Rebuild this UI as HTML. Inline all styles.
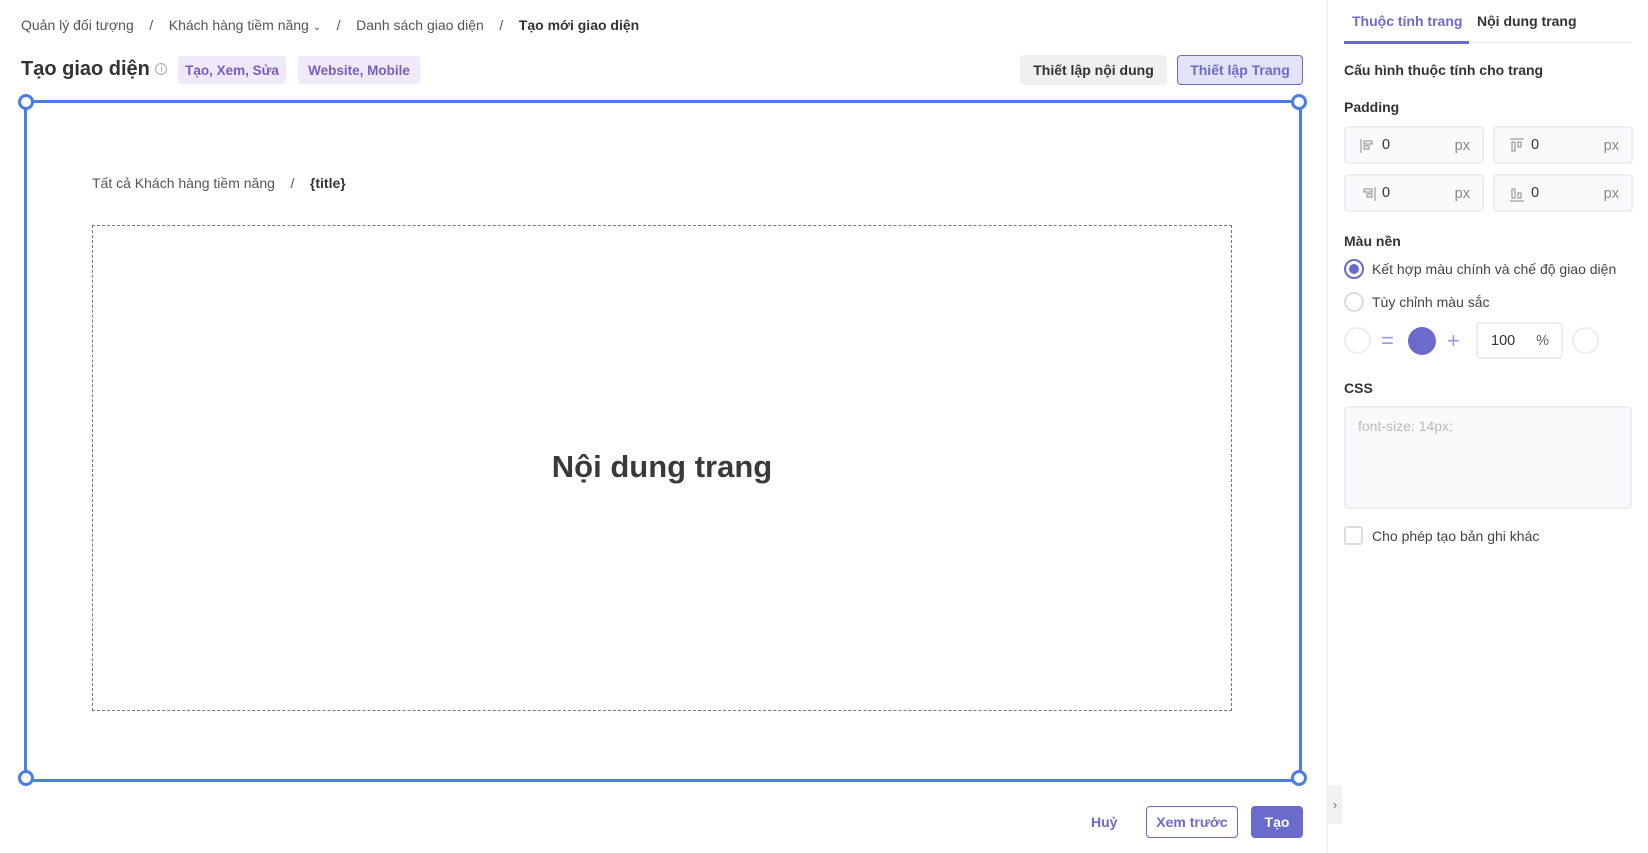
<!DOCTYPE html>
<html><head><meta charset="utf-8"><style>
*{box-sizing:border-box;margin:0;padding:0}
body{width:1648px;height:853px;background:#fff;font-family:"Liberation Sans",sans-serif;color:#333;position:relative;overflow:hidden;font-size:14px}
.a{position:absolute;white-space:nowrap}
.bc{color:#555;font-size:14px}
.tag{position:absolute;background:#efe9f9;color:#7b5cc4;border-radius:4px;font-size:13.5px;font-weight:bold;display:flex;align-items:center;justify-content:center}
.btn{position:absolute;border-radius:4px;display:flex;align-items:center;justify-content:center;font-size:14px;font-weight:bold}
.inp{position:absolute;border:2px solid #eeeef2;background:#fafafc;border-radius:4px;width:140px;height:38px}
.inp .v{position:absolute;left:36px;top:9px;font-size:14.5px;color:#333}
.inp .u{position:absolute;right:12px;top:10px;font-size:14.5px;color:#888}
.inp .ic{position:absolute;left:14px;top:10px;width:16px;height:16px}
.h{position:absolute;width:16px;height:16px;border:3px solid #4a7de6;background:#fff;border-radius:50%}
.lbl{font-weight:bold;font-size:14px;color:#333}
</style></head><body>
<div class="a bc" style="left:21px;top:17px">Quản lý đối tượng &nbsp;&nbsp;&nbsp;/&nbsp;&nbsp;&nbsp; Khách hàng tiềm năng <span style="font-size:10px">&#8964;</span> &nbsp;&nbsp;&nbsp;/&nbsp;&nbsp;&nbsp; Danh sách giao diện &nbsp;&nbsp;&nbsp;/&nbsp;&nbsp;&nbsp; <b style="color:#333">Tạo mới giao diện</b></div>
<div class="a" style="left:21px;top:58px;font-size:20px;font-weight:bold;color:#333">Tạo giao diện <span style="font-size:10px;color:#aaa;border:1px solid #aaa;border-radius:50%;display:inline-block;width:12px;height:12px;text-align:center;line-height:11px;font-weight:normal;vertical-align:3px">i</span></div>
<div class="tag" style="left:178px;top:56px;width:108px;height:28px">Tạo, Xem, Sửa</div>
<div class="tag" style="left:298px;top:56px;width:122px;height:28px">Website, Mobile</div>
<div class="btn" style="left:1020px;top:55px;width:147px;height:30px;background:#f0f0f0;color:#333">Thiết lập nội dung</div>
<div class="btn" style="left:1177px;top:55px;width:126px;height:30px;background:#e3e3f7;border:1px solid #6b6bcb;color:#6b6bcb">Thiết lập Trang</div>

<div class="a" style="left:24px;top:100px;width:1278px;height:682px;border:3px solid #4a7de6"></div>
<div class="h" style="left:18px;top:94px"></div>
<div class="h" style="left:1291px;top:94px"></div>
<div class="h" style="left:18px;top:770px"></div>
<div class="h" style="left:1291px;top:770px"></div>
<div class="a bc" style="left:92px;top:175px;color:#555">Tất cả Khách hàng tiềm năng &nbsp;&nbsp;&nbsp;/&nbsp;&nbsp;&nbsp; <b style="color:#333">{title}</b></div>
<div class="a" style="left:92px;top:225px;width:1140px;height:486px;border:1px dashed #777"></div>
<div class="a" style="left:0;top:449px;width:1324px;text-align:center;font-size:31px;font-weight:bold;color:#3a3a3a">Nội dung trang</div>

<div class="a" style="left:1091px;top:814px;color:#6b6bcb;font-weight:bold;font-size:14px">Huỷ</div>
<div class="btn" style="left:1146px;top:806px;width:92px;height:32px;border:1px solid #6b6bcb;color:#6b6bcb">Xem trước</div>
<div class="btn" style="left:1251px;top:806px;width:52px;height:32px;background:#6b6bcb;color:#fff">Tạo</div>

<div class="a" style="left:1327px;top:0;width:1px;height:853px;background:#ececec"></div>
<div class="a" style="left:1328px;top:785px;width:14px;height:39px;background:#f2f2f2;color:#777;font-size:13px;text-align:center;line-height:39px">›</div>

<div class="a" style="left:1352px;top:13px;font-weight:bold;font-size:14px;color:#6b6bcb">Thuộc tính trang</div>
<div class="a" style="left:1477px;top:13px;font-weight:bold;font-size:14px;color:#333">Nội dung trang</div>
<div class="a" style="left:1344px;top:42px;width:288px;height:1px;background:#e8e8e8"></div>
<div class="a" style="left:1344px;top:41px;width:125px;height:3px;background:#6b6bcb"></div>
<div class="a lbl" style="left:1344px;top:62px">Cấu hình thuộc tính cho trang</div>
<div class="a lbl" style="left:1344px;top:99px">Padding</div>
<div class="inp" style="left:1344px;top:126px"><svg class="ic" viewBox="0 0 16 16" fill="none" stroke="#888"><path d="M1 1v14M4 3h8v3H4zM4 8h5v3H4z"/></svg><span class="v">0</span><span class="u">px</span></div>
<div class="inp" style="left:1493px;top:126px"><svg class="ic" viewBox="0 0 16 16" fill="none" stroke="#888"><path d="M1 1h14M3 4h3v9H3zM9 4h3v5H9z"/></svg><span class="v">0</span><span class="u">px</span></div>
<div class="inp" style="left:1344px;top:174px"><svg class="ic" viewBox="0 0 16 16" fill="none" stroke="#888"><path d="M15 1v14M4 3h8v3H4zM7 8h5v3H7z"/></svg><span class="v">0</span><span class="u">px</span></div>
<div class="inp" style="left:1493px;top:174px"><svg class="ic" viewBox="0 0 16 16" fill="none" stroke="#888"><path d="M1 15h14M3 3h3v9H3zM9 7h3v5H9z"/></svg><span class="v">0</span><span class="u">px</span></div>
<div class="a lbl" style="left:1344px;top:233px">Màu nền</div>
<div class="a" style="left:1344px;top:259px;width:20px;height:20px;border:2px solid #6b6bcb;border-radius:50%"><div style="margin:3px;width:10px;height:10px;border-radius:50%;background:#6b6bcb"></div></div>
<div class="a" style="left:1372px;top:261px;font-size:14px;color:#444">Kết hợp màu chính và chế độ giao diện</div>
<div class="a" style="left:1344px;top:292px;width:20px;height:20px;border:2px solid #ddd;border-radius:50%"></div>
<div class="a" style="left:1372px;top:294px;font-size:14px;color:#444">Tùy chỉnh màu sắc</div>
<div class="a" style="left:1344px;top:327px;width:27px;height:27px;border:2px solid #eee;border-radius:50%"></div>
<div class="a" style="left:1381px;top:328px;font-size:22px;color:#9a9ae0">=</div>
<div class="a" style="left:1408px;top:327px;width:28px;height:28px;border-radius:50%;background:#6b6bcb"></div>
<div class="a" style="left:1447px;top:328px;font-size:22px;color:#9a9ae0">+</div>
<div class="a" style="left:1476px;top:322px;width:87px;height:37px;border:2px solid #eee;border-radius:4px"><span style="position:absolute;left:13px;top:9px;font-size:14.5px">100</span><span style="position:absolute;right:12px;top:9px;font-size:14.5px;color:#666">%</span></div>
<div class="a" style="left:1572px;top:327px;width:27px;height:27px;border:2px solid #eee;border-radius:50%"></div>
<div class="a lbl" style="left:1344px;top:380px">CSS</div>
<div class="a" style="left:1344px;top:406px;width:288px;height:103px;border:2px solid #eeeef2;background:#fafafc;border-radius:4px"><span style="position:absolute;left:12px;top:10px;font-size:14px;color:#bbb">font-size: 14px;</span></div>
<div class="a" style="left:1344px;top:526px;width:19px;height:19px;border:2px solid #ddd;border-radius:3px"></div>
<div class="a" style="left:1372px;top:528px;font-size:14px;color:#444">Cho phép tạo bản ghi khác</div>
</body></html>
